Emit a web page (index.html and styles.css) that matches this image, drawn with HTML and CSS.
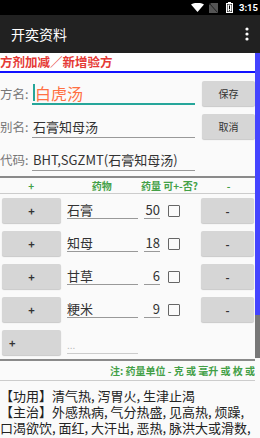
FILE: index.html
```html
<!DOCTYPE html>
<html lang="zh">
<head>
  <meta charset="UTF-8">
  <title>开奕资料</title>
  <meta name="viewport" content="width=device-width, initial-scale=1.0">
  <link rel="stylesheet" href="styles.css">
</head>
<body>

  <div class="status">
    <svg class="wifi" width="13" height="9" viewBox="0 0 13 9"><path d="M0 1.5 Q6.5 -2 13 1.5 L6.5 9 Z" fill="#fff"/></svg>
    <svg class="sim" width="9" height="10" viewBox="0 0 9 10"><path d="M2 0 H9 V10 H0 V2 Z" fill="#555"/><path d="M0.5 0.5 L8.5 9.5" stroke="#222" stroke-width="1"/></svg>
    <svg class="battery" width="7" height="11" viewBox="0 0 7 11"><rect x="2" y="0" width="3" height="1.5" fill="#fff"/><rect x="0.5" y="1.5" width="6" height="9" fill="none" stroke="#fff" stroke-width="1"/><rect x="1.5" y="2.5" width="4" height="7" fill="#fff"/><rect x="3" y="3.5" width="1" height="3.5" fill="#000"/><rect x="3" y="7.8" width="1" height="1" fill="#000"/></svg>
    <span class="time">3:15</span>
  </div>

  <div class="appbar">
    <span class="title">开奕资料</span>
    <svg class="menu" width="4" height="14" viewBox="0 0 4 14"><circle cx="2" cy="2" r="1.6" fill="#fff"/><circle cx="2" cy="7" r="1.6" fill="#fff"/><circle cx="2" cy="12" r="1.6" fill="#fff"/></svg>
  </div>

  <div class="page">
    <div class="head">方剂加减／新增验方</div>

    <div class="form">
      <div class="frow">
        <span class="label">方名:</span>
        <div class="field active"><span class="cursor"></span>白虎汤</div>
        <button class="btn">保存</button>
      </div>
      <div class="frow">
        <span class="label">别名:</span>
        <div class="field">石膏知母汤</div>
        <button class="btn">取消</button>
      </div>
      <div class="frow">
        <span class="label">代码:</span>
        <div class="field">BHT,SGZMT(石膏知母汤)</div>
      </div>
    </div>

    <div class="thead">
      <span class="c-add">+</span>
      <span class="c-name">药物</span>
      <span class="c-dose">药量 可+-否?</span>
      <span class="c-del">-</span>
    </div>

    <div class="list">
      <div class="row">
        <button class="btn add">+</button>
        <div class="name">石膏</div>
        <div class="dose">50</div>
        <span class="check"></span>
        <button class="btn del">-</button>
      </div>
      <div class="row">
        <button class="btn add">+</button>
        <div class="name">知母</div>
        <div class="dose">18</div>
        <span class="check"></span>
        <button class="btn del">-</button>
      </div>
      <div class="row">
        <button class="btn add">+</button>
        <div class="name">甘草</div>
        <div class="dose">6</div>
        <span class="check"></span>
        <button class="btn del">-</button>
      </div>
      <div class="row">
        <button class="btn add">+</button>
        <div class="name">粳米</div>
        <div class="dose">9</div>
        <span class="check"></span>
        <button class="btn del">-</button>
      </div>
      <div class="row">
        <button class="btn add last">+</button>
        <div class="name empty">...</div>
      </div>
    </div>

    <div class="note">注: 药量单位 - 克 或 毫升 或 枚 或 份</div>

    <div class="desc">
      <p>【功用】清气热, 泻胃火, 生津止渴</p>
      <p>【主治】外感热病, 气分热盛, 见高热, 烦躁, 口渴欲饮, 面红, 大汗出, 恶热, 脉洪大或滑数, 以及胃火旺的头痛, 齿痛, 鼻衄, 牙龈出血等</p>
    </div>

    <div class="scrollbar"></div>
  </div>

</body>
</html>
```

FILE: styles.css
```css
body {
  margin: 0;
  width: 260px;
  height: 438px;
  overflow: hidden;
  background-color: #fafafa;
  font-family: "Noto Sans CJK SC", Roboto, sans-serif;
  color: #222;
}
.status {
  height: 15px;
  background-color: #000;
  display: flex;
  align-items: center;
  justify-content: flex-end;
  padding-right: 2px;
}
.status .wifi {
  margin-right: 5px;
}
.status .sim {
  margin-right: 8px;
}
.status .battery {
  margin-right: 6px;
}
.time {
  color: #fff;
  font-family: Roboto, sans-serif;
  font-size: 9.5px;
  font-weight: bold;
}
.appbar {
  height: 38px;
  background-color: #212121;
  display: flex;
  align-items: center;
  justify-content: space-between;
  padding: 0 11px 0 11px;
}
.title {
  color: #fff;
  font-size: 14px;
}
.page {
  position: relative;
  padding-right: 5px;
}
.head {
  height: 18px;
  background-color: #fff;
  color: #e53935;
  font-size: 12.5px;
  font-weight: bold;
  line-height: 18px;
  border-bottom: 2px solid #1111ff;
  white-space: nowrap;
}
.form {
  padding-top: 4px;
}
.frow {
  display: flex;
  align-items: center;
  height: 33px;
}
.label {
  width: 32px;
  font-size: 12.5px;
  color: #777;
  white-space: nowrap;
  overflow: hidden;
}
.field {
  width: 163px;
  height: 22px;
  line-height: 22px;
  font-size: 13px;
  color: #333;
  border-bottom: 1px solid #999;
  white-space: nowrap;
  padding-left: 1px;
  box-sizing: border-box;
}
.field.active {
  font-size: 16px;
  color: #ff7043;
  border-bottom: 2px solid #26a69a;
  display: flex;
  align-items: center;
}
.cursor {
  width: 2px;
  height: 17px;
  background-color: #26a69a;
}
.btn {
  background-color: #d6d6d6;
  border: none;
  border-radius: 2px;
  box-shadow: 0 1px 1px rgba(0, 0, 0, 0.2);
  font-family: "Noto Sans CJK SC", sans-serif;
  font-size: 10px;
  color: #333;
  padding: 0;
}
.frow .btn {
  width: 53px;
  height: 25px;
  margin-left: 7px;
}
.thead {
  border-top: 2px solid #8a8a8a;
  border-bottom: 1px solid #ccc;
  height: 15px;
  display: flex;
  align-items: center;
  color: #43a047;
  font-size: 10px;
  font-weight: bold;
  white-space: nowrap;
}
.c-add {
  width: 59px;
  margin-left: 2px;
  text-align: center;
}
.c-name {
  width: 71px;
  margin-left: 6px;
  text-align: center;
}
.c-dose {
  width: 60px;
  margin-left: 4px;
}
.c-del {
  width: 53px;
  margin-left: 2px;
  text-align: center;
}
.list {
  border-bottom: 2px solid #8a8a8a;
}
.row {
  display: flex;
  align-items: center;
  height: 33px;
  padding-left: 2px;
}
.row .btn {
  height: 25px;
  font-size: 11px;
  font-weight: bold;
}
.add {
  width: 59px;
}
.add.last {
  text-align: left;
  padding-left: 7px;
}
.del {
  width: 53px;
  margin-left: 21px;
}
.name {
  width: 71px;
  margin-left: 6px;
  height: 16px;
  line-height: 16px;
  font-size: 13px;
  color: #333;
  border-bottom: 1px solid #999;
}
.name.empty {
  color: #bbb;
  font-size: 10px;
  margin-top: 5px;
  border-bottom-color: #ccc;
}
.dose {
  width: 16px;
  margin-left: 6px;
  height: 16px;
  line-height: 16px;
  font-size: 13px;
  color: #333;
  text-align: right;
  border-bottom: 1px solid #999;
}
.check {
  width: 10px;
  height: 10px;
  margin-left: 8px;
  border: 1.5px solid #666;
  border-radius: 1px;
}
.note {
  height: 19px;
  line-height: 19px;
  border-bottom: 1px solid #ccc;
  padding-left: 110px;
  color: #43a047;
  font-size: 10px;
  font-weight: bold;
  white-space: nowrap;
  overflow: hidden;
}
.desc {
  padding-top: 7px;
  font-size: 13px;
  line-height: 16px;
  color: #222;
}
.desc p {
  margin: 0;
}
.scrollbar {
  position: absolute;
  top: 0;
  right: 0;
  width: 5px;
  height: 305px;
  background: linear-gradient(#4444ff 0, #4444ff 262px, #777 262px);
}
```
